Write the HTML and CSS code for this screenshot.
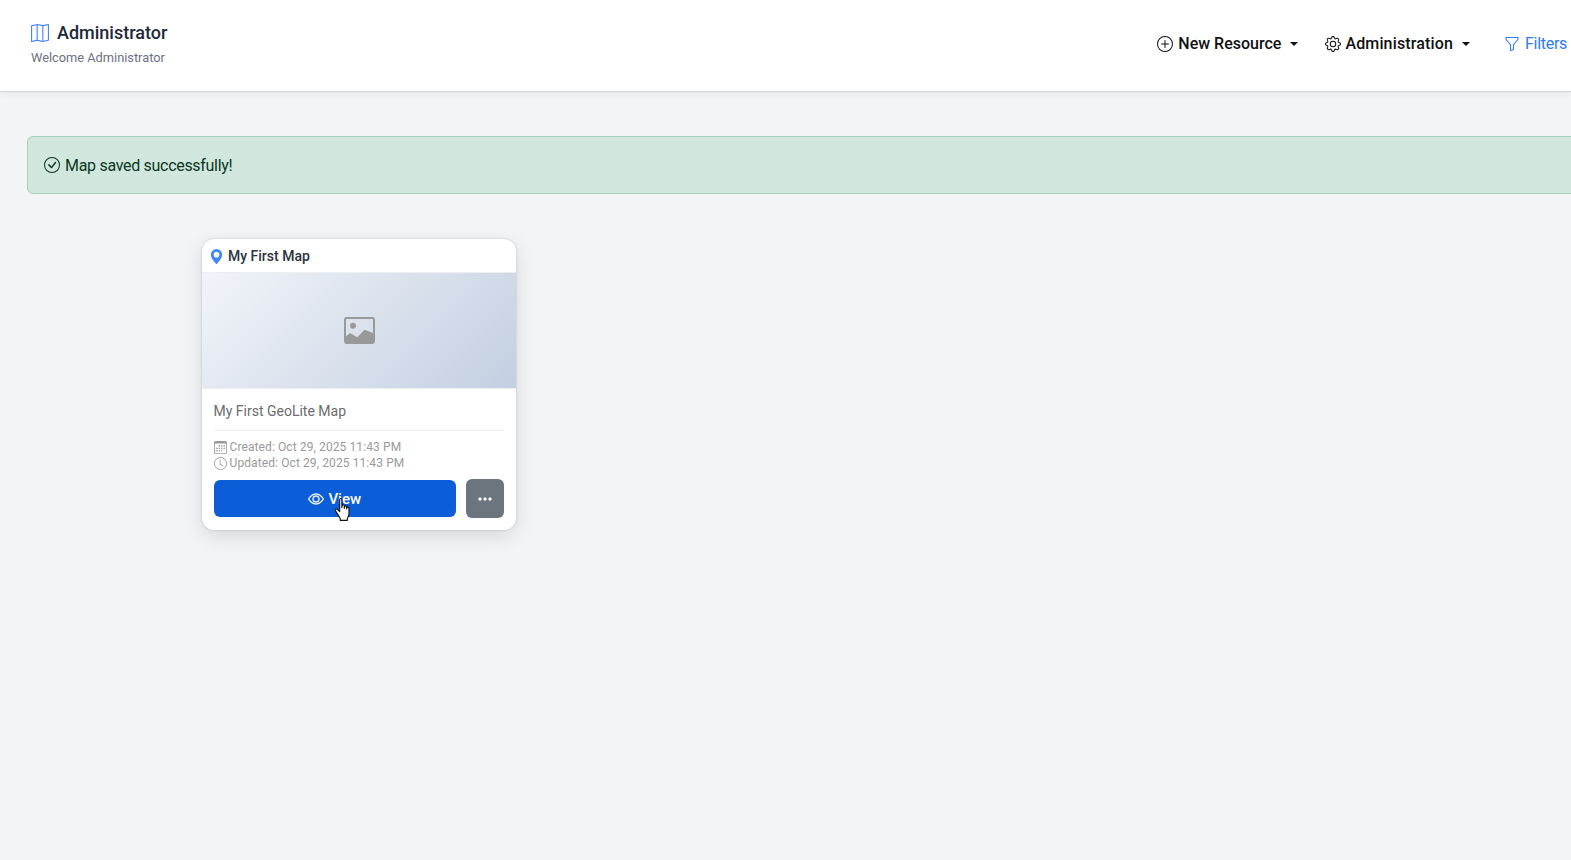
FILE: index.html
```html
<!DOCTYPE html>
<html lang="en">
<head>
<meta charset="UTF-8">
<title>Administrator</title>
<link rel="stylesheet" href="styles.css">
</head>
<body>
<header class="topbar">
  <div class="brand">
    <div class="brand-title">
      <svg class="brand-icon" viewBox="0 0 16 16" fill="currentColor"><path fill-rule="evenodd" d="M15.817.113A.5.5 0 0 1 16 .5v14a.5.5 0 0 1-.402.49l-5 1a.502.502 0 0 1-.196 0L5.5 15.01l-4.902.98A.5.5 0 0 1 0 15.5v-14a.5.5 0 0 1 .402-.49l5-1a.5.5 0 0 1 .196 0L10.5.99l4.902-.98a.5.5 0 0 1 .415.103zM10 1.91l-4-.8v12.98l4 .8V1.91zm1 12.98 4-.8V1.11l-4 .8v12.98zm-6-.8V1.11l-4 .8v12.98l4-.8z"/></svg>
      <span>Administrator</span>
    </div>
    <div class="brand-sub">Welcome Administrator</div>
  </div>
  <nav class="nav">
    <a class="nav-link nav-new">
      <svg class="nav-icon" viewBox="0 0 16 16" fill="currentColor"><path d="M8 15A7 7 0 1 1 8 1a7 7 0 0 1 0 14zm0 1A8 8 0 1 0 8 0a8 8 0 0 0 0 16z"/><path d="M8 4a.5.5 0 0 1 .5.5v3h3a.5.5 0 0 1 0 1h-3v3a.5.5 0 0 1-1 0v-3h-3a.5.5 0 0 1 0-1h3v-3A.5.5 0 0 1 8 4z"/></svg>
      <span>New Resource</span>
      <i class="caret"></i>
    </a>
    <a class="nav-link nav-admin">
      <svg class="nav-icon" viewBox="0 0 16 16" fill="currentColor"><path d="M8 4.754a3.246 3.246 0 1 0 0 6.492 3.246 3.246 0 0 0 0-6.492zM5.754 8a2.246 2.246 0 1 1 4.492 0 2.246 2.246 0 0 1-4.492 0z"/><path d="M9.796 1.343c-.527-1.79-3.065-1.79-3.592 0l-.094.319a.873.873 0 0 1-1.255.52l-.292-.16c-1.64-.892-3.433.902-2.54 2.541l.159.292a.873.873 0 0 1-.52 1.255l-.319.094c-1.79.527-1.79 3.065 0 3.592l.319.094a.873.873 0 0 1 .52 1.255l-.16.292c-.892 1.64.901 3.434 2.541 2.54l.292-.159a.873.873 0 0 1 1.255.52l.094.319c.527 1.79 3.065 1.79 3.592 0l.094-.319a.873.873 0 0 1 1.255-.52l.292.16c1.64.893 3.434-.902 2.54-2.541l-.159-.292a.873.873 0 0 1 .52-1.255l.319-.094c1.79-.527 1.79-3.065 0-3.592l-.319-.094a.873.873 0 0 1-.52-1.255l.16-.292c.893-1.64-.902-3.433-2.541-2.54l-.292.159a.873.873 0 0 1-1.255-.52l-.094-.319zm-2.633.283c.246-.835 1.428-.835 1.674 0l.094.319a1.873 1.873 0 0 0 2.693 1.115l.291-.16c.764-.415 1.6.42 1.184 1.185l-.159.292a1.873 1.873 0 0 0 1.116 2.692l.318.094c.835.246.835 1.428 0 1.674l-.319.094a1.873 1.873 0 0 0-1.115 2.693l.16.291c.415.764-.42 1.6-1.185 1.184l-.291-.159a1.873 1.873 0 0 0-2.693 1.116l-.094.318c-.246.835-1.428.835-1.674 0l-.094-.319a1.873 1.873 0 0 0-2.692-1.115l-.292.16c-.764.415-1.6-.42-1.184-1.185l.159-.291A1.873 1.873 0 0 0 1.945 8.93l-.319-.094c-.835-.246-.835-1.428 0-1.674l.319-.094A1.873 1.873 0 0 0 3.06 4.377l-.16-.292c-.415-.764.42-1.6 1.185-1.184l.292.159a1.873 1.873 0 0 0 2.692-1.115l.094-.319z"/></svg>
      <span>Administration</span>
      <i class="caret"></i>
    </a>
    <a class="nav-link nav-filters">
      <svg class="nav-icon" viewBox="0 0 16 16" fill="currentColor"><path d="M1.5 1.5A.5.5 0 0 1 2 1h12a.5.5 0 0 1 .5.5v2a.5.5 0 0 1-.128.334L10 8.692V13.5a.5.5 0 0 1-.342.474l-3 1A.5.5 0 0 1 6 14.5V8.692L1.628 3.834A.5.5 0 0 1 1.5 3.5v-2zm1 .5v1.308l4.372 4.858A.5.5 0 0 1 7 8.5v5.306l2-.666V8.5a.5.5 0 0 1 .128-.334L13.5 3.308V2h-11z"/></svg>
      <span>Filters</span>
    </a>
  </nav>
</header>

<main class="content">
  <div class="alert">
    <svg class="alert-icon" viewBox="0 0 16 16" fill="currentColor"><path d="M8 15A7 7 0 1 1 8 1a7 7 0 0 1 0 14zm0 1A8 8 0 1 0 8 0a8 8 0 0 0 0 16z"/><path d="M10.97 4.97a.235.235 0 0 0-.02.022L7.477 9.417 5.384 7.323a.75.75 0 0 0-1.06 1.06L6.97 11.03a.75.75 0 0 0 1.079-.02l3.992-4.99a.75.75 0 0 0-1.071-1.05z"/></svg>
    <span>Map saved successfully!</span>
  </div>

  <article class="card">
    <div class="card-head">
      <svg class="pin" viewBox="0 0 16 16" fill="currentColor"><path d="M8 16s6-5.686 6-10A6 6 0 0 0 2 6c0 4.314 6 10 6 10zm0-7a3 3 0 1 1 0-6 3 3 0 0 1 0 6z"/></svg>
      <span>My First Map</span>
    </div>
    <div class="thumb">
      <svg class="thumb-icon" viewBox="0 0 31 27" fill="currentColor"><path fill-rule="evenodd" d="M3 0h25a3 3 0 0 1 3 3v21a3 3 0 0 1-3 3H3a3 3 0 0 1-3-3V3a3 3 0 0 1 3-3zM3 2a1 1 0 0 0-1 1v16.300l4-3.300 7.300 4.300 7.300-7.600 8.400 3.300V3a1 1 0 0 0-1-1z"/><circle cx="9" cy="8.700" r="3"/></svg>
    </div>
    <div class="card-body">
      <p class="desc">My First GeoLite Map</p>
      <div class="meta">
        <div class="meta-row">
          <svg class="meta-icon" viewBox="0 0 16 16" fill="currentColor"><path d="M14 0H2a2 2 0 0 0-2 2v12a2 2 0 0 0 2 2h12a2 2 0 0 0 2-2V2a2 2 0 0 0-2-2zM1 3.857C1 3.384 1.448 3 2 3h12c.552 0 1 .384 1 .857v10.286c0 .473-.448.857-1 .857H2c-.552 0-1-.384-1-.857V3.857z"/><path d="M6.500 7a1 1 0 1 0 0-2 1 1 0 0 0 0 2zm3 0a1 1 0 1 0 0-2 1 1 0 0 0 0 2zm3 0a1 1 0 1 0 0-2 1 1 0 0 0 0 2zm-9 3a1 1 0 1 0 0-2 1 1 0 0 0 0 2zm3 0a1 1 0 1 0 0-2 1 1 0 0 0 0 2zm3 0a1 1 0 1 0 0-2 1 1 0 0 0 0 2zm3 0a1 1 0 1 0 0-2 1 1 0 0 0 0 2zm-9 3a1 1 0 1 0 0-2 1 1 0 0 0 0 2zm3 0a1 1 0 1 0 0-2 1 1 0 0 0 0 2zm3 0a1 1 0 1 0 0-2 1 1 0 0 0 0 2z"/></svg>
          <span>Created: Oct 29, 2025 11:43 PM</span>
        </div>
        <div class="meta-row">
          <svg class="meta-icon" viewBox="0 0 16 16" fill="currentColor"><path d="M8 3.500a.5.5 0 0 0-1 0V9a.5.5 0 0 0 .252.434l3.500 2a.5.5 0 0 0 .496-.868L8 8.710V3.500z"/><path d="M8 16A8 8 0 1 0 8 0a8 8 0 0 0 0 16zm7-8A7 7 0 1 1 1 8a7 7 0 0 1 14 0z"/></svg>
          <span>Updated: Oct 29, 2025 11:43 PM</span>
        </div>
      </div>
      <div class="actions">
        <button class="btn-view">
          <svg class="btn-icon" viewBox="0 0 16 16" fill="currentColor"><path d="M16 8s-3-5.500-8-5.500S0 8 0 8s3 5.500 8 5.500S16 8 16 8zM1.173 8a13.133 13.133 0 0 1 1.660-2.043C4.120 4.668 5.880 3.500 8 3.500c2.120 0 3.879 1.168 5.168 2.457A13.133 13.133 0 0 1 14.828 8c-.058.087-.122.183-.195.288-.335.480-.830 1.120-1.465 1.755C11.879 11.332 10.119 12.500 8 12.500c-2.120 0-3.879-1.168-5.168-2.457A13.134 13.134 0 0 1 1.172 8z"/><path d="M8 5.500a2.500 2.500 0 1 0 0 5 2.500 2.500 0 0 0 0-5zM4.500 8a3.500 3.500 0 1 1 7 0 3.500 3.500 0 0 1-7 0z"/></svg>
          <span>View</span>
          <svg class="cursor" viewBox="0 0 17 22"><path fill="#fff" stroke="#111" stroke-width="1" stroke-linejoin="round" d="M5 1.500c0-1.300 2-1.300 2 0V9l.2-2c.2-1.200 1.900-1.100 2 0V9.500l.2-1.500c.2-1.100 1.900-1 2 .1v1.900l.2-1c.3-1 1.800-.8 1.900.3v5.200c0 2-.8 3-1.500 4.200v1.800H5.500v-1.800C4 16 2.500 14 1.200 11.800c-.6-1.100.8-2.300 1.900-1.200L5 12.500z"/></svg>
        </button>
        <button class="btn-more">
          <svg class="btn-icon" viewBox="0 0 16 16" fill="currentColor"><path d="M3 9.500a1.500 1.500 0 1 1 0-3 1.500 1.500 0 0 1 0 3zm5 0a1.500 1.500 0 1 1 0-3 1.500 1.500 0 0 1 0 3zm5 0a1.500 1.500 0 1 1 0-3 1.500 1.500 0 0 1 0 3z"/></svg>
        </button>
      </div>
    </div>
  </article>
</main>
</body>
</html>
```

FILE: styles.css
```css
*{
  margin: 0;
  padding: 0;
  box-sizing: border-box;
}
html, body{
  height: 100%;
  overflow: hidden;
}
body{
  background-color: #f3f4f6;
  font-family: Roboto, "Liberation Sans", sans-serif;
  color: #212529;
}
.topbar{
  height: 92px;
  padding: 0 4px 3px 31px;
  display: flex;
  align-items: center;
  justify-content: space-between;
  background-color: #fff;
  border-bottom: 1px solid #d5d6d9;
  box-shadow: 0 2px 8px rgba(0, 0, 0, .06);
}
.brand-title{
  display: flex;
  align-items: center;
  gap: 8px;
  font-size: 18px;
  font-weight: 500;
  line-height: 24px;
  color: #1f2937;
}
.brand-icon{
  width: 18px;
  height: 18px;
  color: #4a86f7;
}
.brand-sub{
  margin-top: 3px;
  font-size: 12.800px;
  line-height: 20px;
  color: #6b7280;
}
.nav{
  display: flex;
  align-items: center;
  padding-bottom: 1px;
}
.nav-link{
  display: flex;
  align-items: center;
  font-size: 16px;
  font-weight: 500;
  line-height: 24px;
  color: #111;
}
.nav-icon{
  width: 16px;
  height: 16px;
  margin-right: 5px;
}
.nav-new{
  margin-right: 27px;
}
.nav-admin{
  margin-right: 34px;
  letter-spacing: .15px;
}
.nav-admin .nav-icon{
  margin-right: 4px;
}
.nav-filters{
  font-weight: 400;
  letter-spacing: -.3px;
  color: #2b7cf6;
}
.caret{
  margin-left: 9px;
  border-top: 4.500px solid #111;
  border-left: 4.500px solid transparent;
  border-right: 4.500px solid transparent;
}
.content{
  padding: 44px 0 0 27px;
}
.alert{
  width: 1600px;
  height: 58px;
  padding: 0 16px;
  display: flex;
  align-items: center;
  gap: 5px;
  background-color: #d1e7dd;
  border: 1px solid #a3cfbb;
  border-radius: 6px;
  font-size: 16px;
  letter-spacing: -.3px;
  color: #0a3622;
}
.alert-icon{
  width: 16px;
  height: 16px;
}
.card{
  width: 314px;
  margin: 45px 0 0 175px;
  background-color: #fff;
  border-radius: 12px;
  box-shadow: 0 0 2px rgba(0, 0, 0, .22), 0 6px 20px rgba(0, 0, 0, .12);
  overflow: hidden;
}
.card-head{
  height: 33px;
  padding: 1px 7px 0;
  display: flex;
  align-items: center;
  gap: 4px;
  font-size: 14px;
  font-weight: 500;
  color: #2b3340;
}
.pin{
  width: 15px;
  height: 15px;
  color: #3f86f6;
}
.thumb{
  height: 117px;
  display: flex;
  align-items: center;
  justify-content: center;
  background: linear-gradient(135deg, #f1f4f9 0%, #c3cfe1 100%);
  border-top: 1px solid #eceef1;
  border-bottom: 1px solid #eceef1;
}
.thumb-icon{
  width: 31px;
  height: 27px;
  color: #999;
}
.card-body{
  padding: 13px 12px 12px 11.500px;
}
.desc{
  padding-bottom: 10px;
  border-bottom: 1px solid #eeeff1;
  font-size: 14px;
  line-height: 18px;
  color: #6c6c6c;
}
.meta{
  margin-top: 8px;
  font-size: 12px;
  letter-spacing: .1px;
  color: #9a9a9a;
}
.meta-row{
  display: flex;
  align-items: center;
  gap: 3px;
  height: 16px;
}
.meta-icon{
  width: 13px;
  height: 13px;
}
.actions{
  margin-top: 8px;
  display: flex;
  align-items: center;
  justify-content: space-between;
}
.actions button{
  border: 0;
  font-family: inherit;
  color: #fff;
}
.btn-view{
  position: relative;
  width: 242.500px;
  height: 37px;
  display: flex;
  align-items: center;
  justify-content: center;
  gap: 4px;
  background-color: #0b5ed7;
  border-radius: 6px;
  font-size: 15px;
  font-weight: 500;
}
.btn-more{
  width: 38px;
  height: 39px;
  display: flex;
  align-items: center;
  justify-content: center;
  background-color: #6c757d;
  border-radius: 6px;
}
.btn-icon{
  width: 16px;
  height: 16px;
  stroke: currentColor;
  stroke-width: .3;
}
.cursor{
  position: absolute;
  left: 120px;
  top: 18px;
  width: 19px;
  height: 24px;
}
```
